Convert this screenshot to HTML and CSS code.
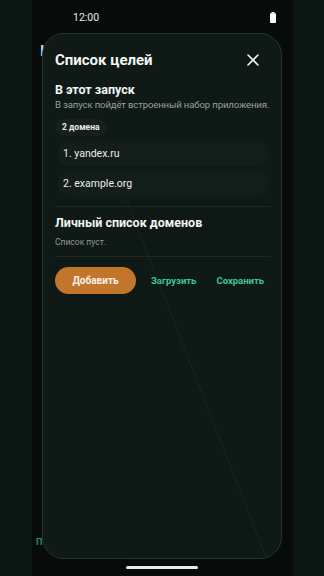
FILE: index.html
```html
<!DOCTYPE html>
<html lang="ru">
<head>
<meta charset="utf-8">
<link rel="stylesheet" href="styles.css">
</head>
<body>
<div class="screen">
  <div class="app">
    <div class="app-title">I</div>
    <div class="app-foot">П</div>
  </div>
  <div class="statusbar">
    <span class="time">12:00</span>
    <svg class="battery" width="6" height="11" viewBox="0 0 6 11"><rect x="1.5" y="0" width="3" height="1.5" fill="#fff"/><rect x="0" y="1.2" width="6" height="9.8" rx="0.8" fill="#fff"/></svg>
  </div>
  <div class="dialog">
    <svg class="streak" width="240" height="526" viewBox="0 0 240 526"><line x1="84" y1="167" x2="224" y2="526" stroke="#2a4a3e" stroke-width="0.8" opacity="0.35"/></svg>
    <div class="dlg-head">
      <h1 class="dlg-title">Список целей</h1>
      <svg class="close" width="12" height="12" viewBox="0 0 12 12"><path d="M1 1L11 11M11 1L1 11" stroke="#f2f5f4" stroke-width="1.6" stroke-linecap="round"/></svg>
    </div>
    <h2 class="sec-title">В этот запуск</h2>
    <p class="sec-desc">В запуск пойдёт встроенный набор приложения.</p>
    <span class="chip">2 домена</span>
    <ul class="domains">
      <li class="domain">1. yandex.ru</li>
      <li class="domain">2. example.org</li>
    </ul>
    <div class="divider"></div>
    <h2 class="sec-title sec-title2">Личный список доменов</h2>
    <p class="empty">Список пуст.</p>
    <div class="divider divider2"></div>
    <div class="actions">
      <button class="btn-primary">Добавить</button>
      <button class="btn-text">Загрузить</button>
      <button class="btn-text">Сохранить</button>
    </div>
  </div>
  <div class="home-bar"></div>
</div>
</body>
</html>
```
FILE: styles.css
```css
* { box-sizing: border-box; }
html, body {
  margin: 0;
  padding: 0;
  background: #0c1613;
  font-family: Roboto, "Noto Sans", "Liberation Sans", sans-serif;
}
.screen {
  position: relative;
  width: 324px;
  height: 576px;
  overflow: hidden;
  padding: 0 31px 0 32px;
  background: #0c1613;
}
.app {
  position: relative;
  height: 100%;
  background: #070c0a;
}
.app-title {
  position: absolute;
  left: 8px;
  top: 42px;
  color: #cfd6d3;
  font-size: 15px;
  font-weight: 700;
}
.app-foot {
  position: absolute;
  left: 4px;
  top: 537px;
  color: #2f8a6c;
  font-size: 9px;
  font-weight: 700;
}
.statusbar {
  position: absolute;
  left: 0;
  top: 0;
  width: 324px;
  height: 34px;
}
.time {
  position: absolute;
  left: 73px;
  top: 11px;
  color: #e6ebe9;
  font-size: 10.5px;
}
.battery {
  position: absolute;
  left: 270px;
  top: 12px;
}
.dialog {
  position: absolute;
  left: 42px;
  top: 33px;
  width: 240px;
  height: 526px;
  border-radius: 22px;
  background: #0f1916;
  border: 1px solid #1c3a2f;
  padding: 0 12px 0 12px;
  overflow: hidden;
  display: flex;
  flex-direction: column;
  align-items: flex-start;
}
.streak {
  position: absolute;
  left: 0;
  top: 0;
  pointer-events: none;
}
.dlg-head {
  width: 100%;
  display: flex;
  align-items: center;
  justify-content: space-between;
  padding-top: 16px;
  height: 36px;
}
.dlg-title {
  margin: 0;
  color: #f3f6f5;
  font-size: 15px;
  font-weight: 700;
}
.close {
  margin-right: 10px;
}
.sec-title {
  margin: 12px 0 0 0;
  color: #f1f4f3;
  font-size: 12.5px;
  font-weight: 700;
  line-height: 16px;
}
.sec-desc {
  margin: 0;
  color: #96a19c;
  font-size: 9.6px;
  letter-spacing: -0.15px;
  line-height: 14px;
  white-space: nowrap;
}
.chip {
  margin-top: 7px;
  background: #151f1c;
  color: #e8ecea;
  font-size: 8.5px;
  font-weight: 700;
  border-radius: 9px;
  padding: 3px 7px;
  line-height: 11px;
}
.domains {
  list-style: none;
  margin: 5px 0 0 2px;
  padding: 0;
  width: 212px;
  display: flex;
  flex-direction: column;
  gap: 5px;
}
.domain {
  background: #131d1a;
  border-radius: 12px;
  height: 25px;
  line-height: 25px;
  padding-left: 6px;
  color: #e9edeb;
  font-size: 10.5px;
}
.divider {
  width: 216px;
  height: 1px;
  background: #1d2925;
  margin-top: 10px;
}
.sec-title2 {
  margin-top: 8px;
}
.empty {
  margin: 6px 0 0 0;
  color: #8f9a96;
  font-size: 8.5px;
  line-height: 11px;
}
.divider2 {
  margin-top: 8px;
}
.actions {
  margin-top: 10px;
  display: flex;
  align-items: center;
  width: 216px;
}
.btn-primary {
  width: 81px;
  height: 27px;
  border: none;
  border-radius: 14px;
  background: #c2762b;
  color: #fbf3ea;
  font-family: inherit;
  font-size: 10px;
  font-weight: 700;
  padding: 0;
}
.btn-text {
  border: none;
  background: transparent;
  color: #3fc796;
  font-family: inherit;
  font-size: 9.5px;
  font-weight: 700;
  padding: 0;
  margin-left: 15px;
}
.btn-text + .btn-text {
  margin-left: 20px;
}
.home-bar {
  position: absolute;
  left: 126px;
  top: 566px;
  width: 72px;
  height: 3px;
  border-radius: 2px;
  background: #e8eceb;
}
```
